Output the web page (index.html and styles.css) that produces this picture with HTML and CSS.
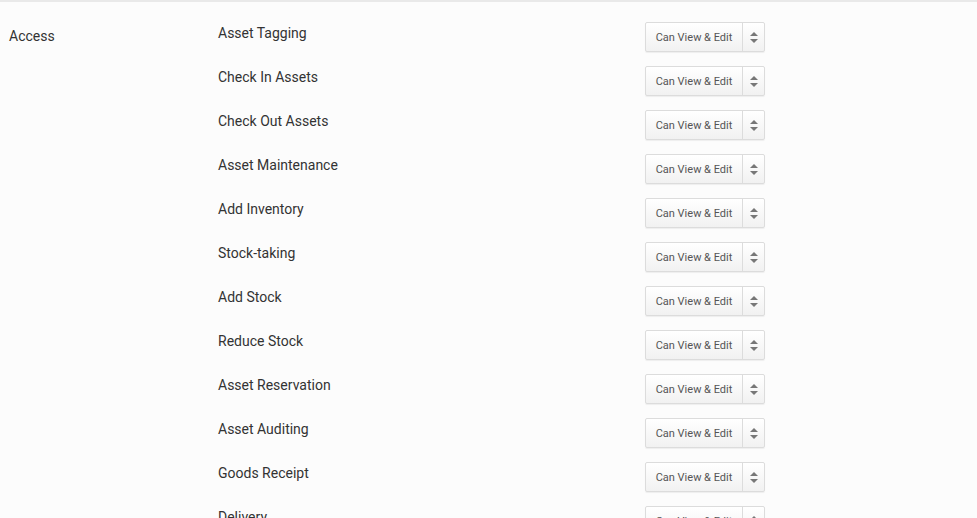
FILE: index.html
```html
<!DOCTYPE html>
<html lang="en">
<head>
  <meta charset="UTF-8">
  <title>Access Permissions</title>
  <link rel="stylesheet" href="styles.css">
</head>
<body>

  <div class="section">
    <div class="section-title">Access</div>

    <div class="perm-list">
      <div class="perm-row">
        <div class="perm-name">Asset Tagging</div>
        <div class="select"><span class="select-text">Can View &amp; Edit</span><span class="select-arrows"><i class="up"></i><i class="down"></i></span></div>
      </div>
      <div class="perm-row">
        <div class="perm-name">Check In Assets</div>
        <div class="select"><span class="select-text">Can View &amp; Edit</span><span class="select-arrows"><i class="up"></i><i class="down"></i></span></div>
      </div>
      <div class="perm-row">
        <div class="perm-name">Check Out Assets</div>
        <div class="select"><span class="select-text">Can View &amp; Edit</span><span class="select-arrows"><i class="up"></i><i class="down"></i></span></div>
      </div>
      <div class="perm-row">
        <div class="perm-name">Asset Maintenance</div>
        <div class="select"><span class="select-text">Can View &amp; Edit</span><span class="select-arrows"><i class="up"></i><i class="down"></i></span></div>
      </div>
      <div class="perm-row">
        <div class="perm-name">Add Inventory</div>
        <div class="select"><span class="select-text">Can View &amp; Edit</span><span class="select-arrows"><i class="up"></i><i class="down"></i></span></div>
      </div>
      <div class="perm-row">
        <div class="perm-name">Stock-taking</div>
        <div class="select"><span class="select-text">Can View &amp; Edit</span><span class="select-arrows"><i class="up"></i><i class="down"></i></span></div>
      </div>
      <div class="perm-row">
        <div class="perm-name">Add Stock</div>
        <div class="select"><span class="select-text">Can View &amp; Edit</span><span class="select-arrows"><i class="up"></i><i class="down"></i></span></div>
      </div>
      <div class="perm-row">
        <div class="perm-name">Reduce Stock</div>
        <div class="select"><span class="select-text">Can View &amp; Edit</span><span class="select-arrows"><i class="up"></i><i class="down"></i></span></div>
      </div>
      <div class="perm-row">
        <div class="perm-name">Asset Reservation</div>
        <div class="select"><span class="select-text">Can View &amp; Edit</span><span class="select-arrows"><i class="up"></i><i class="down"></i></span></div>
      </div>
      <div class="perm-row">
        <div class="perm-name">Asset Auditing</div>
        <div class="select"><span class="select-text">Can View &amp; Edit</span><span class="select-arrows"><i class="up"></i><i class="down"></i></span></div>
      </div>
      <div class="perm-row">
        <div class="perm-name">Goods Receipt</div>
        <div class="select"><span class="select-text">Can View &amp; Edit</span><span class="select-arrows"><i class="up"></i><i class="down"></i></span></div>
      </div>
      <div class="perm-row">
        <div class="perm-name">Delivery</div>
        <div class="select"><span class="select-text">Can View &amp; Edit</span><span class="select-arrows"><i class="up"></i><i class="down"></i></span></div>
      </div>
    </div>
  </div>

</body>
</html>
```

FILE: styles.css
```css
html, body {
  height: 100%;
  overflow: hidden;
}

body {
  margin: 0;
  font-family: Roboto, "Liberation Sans", Arial, sans-serif;
  background-color: #fcfcfc;
  color: #333;
  border-top: 2px solid #e9e9e9;
}

.section {
  display: flex;
  padding-top: 13px;
}

.section-title {
  width: 209px;
  padding-left: 9px;
  padding-top: 12px;
  font-size: 14px;
  line-height: 18px;
}

.perm-list {
  display: flex;
  flex-direction: column;
}

.perm-row {
  display: flex;
  height: 44px;
}

.perm-name {
  width: 427px;
  padding-top: 8px;
  font-size: 14px;
  line-height: 20px;
}

.select {
  display: flex;
  margin-top: 7px;
  height: 28px;
  width: 118px;
  border: 1px solid #dcdcdc;
  border-radius: 2px;
  background: linear-gradient(#ffffff, #f1f1f1);
  box-shadow: 0 1px 1px rgba(0, 0, 0, 0.06);
  font-size: 11px;
  color: #555;
}

.select-text {
  width: 96px;
  padding-top: 1px;
  line-height: 28px;
  text-align: center;
  border-right: 1px solid #dcdcdc;
}

.select-arrows {
  flex: 1;
  display: flex;
  flex-direction: column;
  align-items: center;
  justify-content: center;
  gap: 3px;
}

.select-arrows i {
  width: 0;
  height: 0;
  border-left: 4px solid transparent;
  border-right: 4px solid transparent;
}

.select-arrows .up {
  border-bottom: 4px solid #777;
}

.select-arrows .down {
  border-top: 4px solid #777;
}
```
